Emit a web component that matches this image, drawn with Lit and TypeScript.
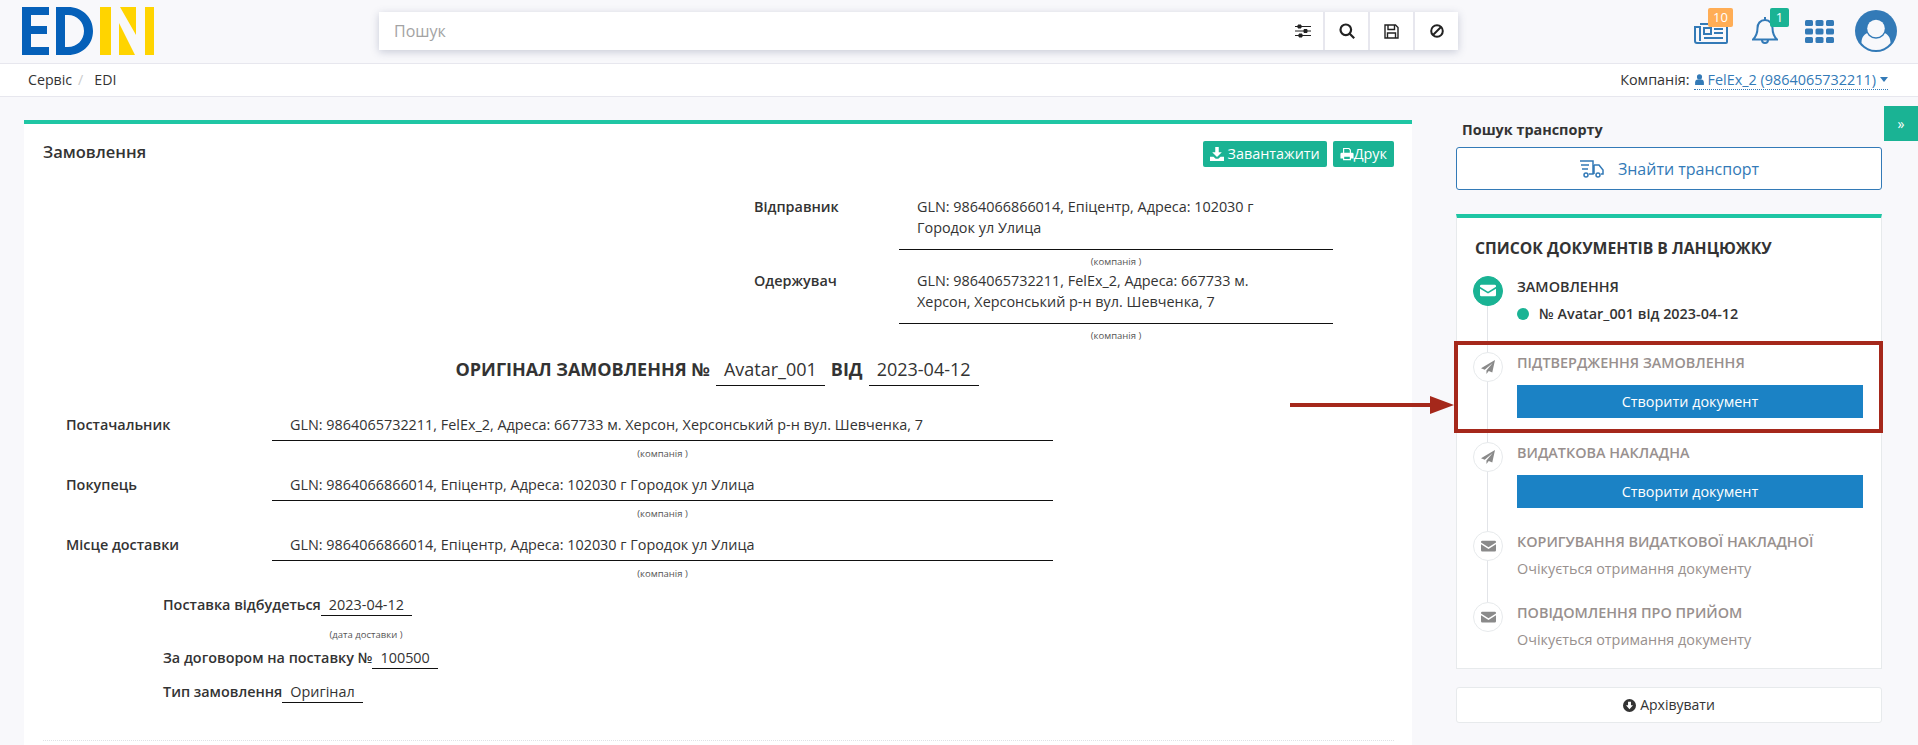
import { LitElement, css, html, svg } from "lit";
import { customElement } from "lit/decorators.js";

const ICONS = {
  envelope: svg`<path d="M1.500 2h15A1.500 1.500 0 0 1 18 3.500v.8L9 9.800 0 4.300v-.8A1.500 1.500 0 0 1 1.500 2zM0 6.400l9 5.500 9-5.500v7.100a1.500 1.500 0 0 1-1.500 1.500h-15A1.500 1.500 0 0 1 0 13.500z"/>`,
  plane: svg`<path d="M18 0 0 10.500l4.800 2L15 4 7 13.500V18l3-3.800 4.500 1.900z"/>`,
  download: svg`<path d="M6 0h4v6h3.500L8 11.500 2.500 6H6zM0 11h4l2.500 2.500h3L12 11h4v5H0z"/>`,
  print: svg`<path fill-rule="evenodd" d="M3.500 1h7L12.500 3v3.500h-1.300V3.600L9.900 2.300H4.800v4.200H3.500zM2 6.500h12A1.500 1.500 0 0 1 15.500 8v5h-3v2h-9v-2h-3V8A1.500 1.500 0 0 1 2 6.500zM4.800 11v2.800h6.400V11z"/>`,
  user: svg`<circle cx="6" cy="4" r="3.500"/><path d="M0 15v-3.500C0 9 1.500 7.500 3.500 7.500h5c2 0 3.500 1.500 3.500 4V15z"/>`,
  archive: svg`<path fill-rule="evenodd" d="M8 0a8 8 0 1 1 0 16A8 8 0 0 1 8 0zM6.200 3.500v4.300H3.700L8 12.500l4.300-4.700H9.800V3.500z"/>`,
};

const icon = (name: keyof typeof ICONS, size: number, box = "0 0 18 18") =>
  html`<svg class="ico" width=${size} height=${size} viewBox=${box} fill="currentColor">${ICONS[name]}</svg>`;

const PARTIES = [
  {
    label: "Постачальник",
    value: "GLN: 9864065732211, FelEx_2, Адреса: 667733 м. Херсон, Херсонський р-н вул. Шевченка, 7",
  },
  { label: "Покупець", value: "GLN: 9864066866014, Епіцентр, Адреса: 102030 г Городок ул Улица" },
  { label: "Місце доставки", value: "GLN: 9864066866014, Епіцентр, Адреса: 102030 г Городок ул Улица" },
];

@customElement("app-root")
export class AppRoot extends LitElement {
  static styles = css`
    :host {
      display: block;
      position: relative;
      height: 745px;
      overflow: hidden;
      background: #f8f8fb;
      color: #333;
      font: 14.4px/20px "Open Sans", sans-serif;
    }
    .ico {
      display: block;
      flex-shrink: 0;
    }
    .topbar {
      height: 63px;
      display: flex;
      align-items: flex-start;
      border-bottom: 1px solid #e7e7ee;
    }
    .logo {
      margin: 7px 0 0 22px;
      flex-shrink: 0;
    }
    .search {
      margin: 12px 0 0 225px;
      width: 1079px;
      height: 38px;
      display: flex;
      background: #fff;
      box-shadow: 0 2px 8px rgba(60, 70, 110, 0.25);
    }
    .search-input {
      flex: 1;
      padding-left: 15px;
      font-size: 16px;
      line-height: 38px;
      color: #a3a3a3;
    }
    .search-btn {
      display: flex;
      align-items: center;
      justify-content: center;
      box-sizing: border-box;
      width: 45px;
      border-left: 2px solid #e7e7ee;
      color: #222;
    }
    .search-btn.first {
      width: 39px;
      border-left: none;
      padding-right: 2px;
    }
    .top-icons {
      position: relative;
      flex: 1;
      height: 63px;
      color: #337ab7;
    }
    .top-icons > svg {
      position: absolute;
    }
    .badge {
      position: absolute;
      top: 8px;
      height: 19px;
      border-radius: 2px;
      color: #fff;
      font-size: 13px;
      line-height: 19px;
      text-align: center;
    }
    .badge.orange {
      left: 250px;
      width: 25px;
      background: #ffad55;
    }
    .badge.green {
      left: 312px;
      width: 19px;
      background: #1ab394;
    }
    .crumbs {
      height: 32px;
      display: flex;
      align-items: center;
      justify-content: space-between;
      padding: 0 30px 0 28px;
      background: #fff;
      border-bottom: 1px solid #e7e7ee;
    }
    .crumbs-left {
      display: flex;
      font-size: 14.2px;
    }
    .crumb-sep {
      margin: 0 11px 0 6px;
      color: #ccc;
    }
    .company {
      display: flex;
      align-items: center;
      gap: 4px;
    }
    .company-link {
      display: flex;
      align-items: center;
      gap: 3px;
      color: #337ab7;
      border-bottom: 1px dotted #337ab7;
      line-height: 19px;
    }
    .caret {
      width: 0;
      height: 0;
      margin-left: 1px;
      border: 4.5px solid transparent;
      border-top: 5px solid #337ab7;
      border-bottom: 0;
    }
    .content {
      display: flex;
      align-items: flex-start;
      padding: 23px 0 0 24px;
    }
    .doc {
      width: 1388px;
      height: 640px;
      flex-shrink: 0;
      box-sizing: border-box;
      background: #fff;
      border-top: 4px solid #1fc6a4;
      padding: 17px 18px 0 19px;
    }
    .doc-head {
      display: flex;
      justify-content: space-between;
      height: 55px;
    }
    .doc-title {
      font-size: 16.5px;
      font-weight: 600;
      line-height: 22px;
    }
    .doc-actions {
      display: flex;
      gap: 6px;
      height: 26px;
    }
    .btn {
      display: flex;
      align-items: center;
      gap: 4px;
      height: 26px;
      padding: 0 7px;
      border-radius: 2px;
      background: #1ab394;
      color: #fff;
    }
    .addresses {
      display: grid;
      grid-template-columns: 145px 434px;
      margin-left: 711px;
    }
    .addr-label {
      font-weight: 600;
      line-height: 21px;
    }
    .addr-value {
      padding: 0 30px 11px 18px;
      border-bottom: 1px solid #111;
      line-height: 21px;
    }
    .caption {
      font-size: 9.5px;
      line-height: 12px;
      text-align: center;
      color: #555;
    }
    .addr-caption {
      grid-column: 2;
      margin: 6px 0 2px;
    }
    .order-title {
      display: flex;
      justify-content: center;
      align-items: baseline;
      margin: 10px 0 0 -3px;
      font-size: 18px;
      font-weight: 700;
      line-height: 31px;
    }
    .fill {
      margin-left: 6px;
      padding: 0 8px;
      border-bottom: 1px solid #111;
      font-weight: 400;
    }
    .order-title .sep {
      margin-left: 6px;
    }
    .parties {
      margin: 24px 0 0 23px;
      display: grid;
      grid-template-columns: 206px 781px;
    }
    .party-label {
      font-weight: 600;
      line-height: 30px;
    }
    .party-value {
      padding-left: 18px;
      border-bottom: 1px solid #111;
      line-height: 30px;
    }
    .party-caption {
      grid-column: 2;
      margin: 7px 0 10px;
    }
    .terms {
      margin: 5px 0 0 120px;
    }
    .term {
      display: flex;
      font-weight: 600;
      line-height: 20px;
    }
    .term-fill {
      padding: 0 8px;
      font-weight: 400;
      border-bottom: 1px solid #111;
    }
    .term-caption {
      width: 92px;
      margin: 13px 0 7px 157px;
      white-space: nowrap;
    }
    .term + .term {
      margin-top: 13px;
    }
    .dots {
      margin-top: 37px;
      border-top: 1px dotted #dfe2e6;
    }
    .side {
      width: 426px;
      margin-left: 44px;
      flex-shrink: 0;
    }
    .side-title {
      padding-left: 6px;
      font-weight: 700;
      line-height: 20px;
    }
    .find {
      display: flex;
      align-items: center;
      justify-content: center;
      gap: 13px;
      height: 43px;
      margin-top: 7px;
      box-sizing: border-box;
      border: 1px solid #337ab7;
      border-radius: 3px;
      background: #fff;
      color: #337ab7;
      font-size: 16px;
    }
    .chain {
      margin-top: 24px;
      height: 455px;
      box-sizing: border-box;
      background: #fff;
      border: 1px solid #e7eaec;
      border-top: 4px solid #1fc6a4;
      padding: 19px 18px 0 16px;
    }
    .chain-title {
      margin: 0 0 17px 2px;
      font-size: 15.75px;
      font-weight: 700;
      line-height: 22px;
      text-transform: uppercase;
    }
    .step {
      position: relative;
      display: flex;
      gap: 14px;
    }
    .step:not(:last-child)::before {
      content: "";
      position: absolute;
      left: 14px;
      top: 0;
      bottom: 0;
      width: 1px;
      background: #e2e4e8;
    }
    .step-dot {
      position: relative;
      width: 30px;
      height: 30px;
      flex-shrink: 0;
      box-sizing: border-box;
      display: flex;
      align-items: center;
      justify-content: center;
      border: 1px solid #e7eaec;
      border-radius: 50%;
      background: #fff;
      color: #8a8a8a;
    }
    .step-dot.done {
      border-color: #1ab394;
      background: #1ab394;
      color: #fff;
    }
    .step-body {
      flex: 1;
      padding-top: 1px;
    }
    .step-title {
      font-weight: 600;
      color: #98908e;
      line-height: 20px;
    }
    .done + .step-body .step-title {
      color: #333;
    }
    .step-note {
      margin-top: 7px;
      color: #98908e;
    }
    .step-doc {
      display: flex;
      align-items: center;
      gap: 10px;
      margin-top: 7px;
      font-weight: 600;
    }
    .status-dot {
      width: 12px;
      height: 12px;
      border-radius: 50%;
      background: #1ab394;
    }
    .create {
      height: 33px;
      margin-top: 12px;
      background: #1b82c5;
      color: #fff;
      line-height: 33px;
      text-align: center;
    }
    .archive {
      display: flex;
      align-items: center;
      justify-content: center;
      gap: 4px;
      height: 36px;
      margin-top: 18px;
      box-sizing: border-box;
      border: 1px solid #e7eaec;
      border-radius: 3px;
      background: #fff;
      font-size: 14px;
    }
    .toggle {
      position: absolute;
      top: 106px;
      right: 0;
      width: 34px;
      height: 35px;
      background: #1ab394;
      color: #fff;
      font-size: 14px;
      line-height: 35px;
      text-align: center;
    }
    .highlight {
      position: absolute;
      left: 1454px;
      top: 341px;
      width: 421px;
      height: 84px;
      border: 4px solid #a5281b;
    }
    .arrow {
      position: absolute;
      left: 1290px;
      top: 396px;
    }
  `;

  private renderTopIcons() {
    return html`
      <div class="top-icons">
        <svg style="left:236px;top:21px" width="34" height="23" viewBox="0 0 34 23" fill="none" stroke="currentColor" stroke-width="2">
          <path d="M6 3h26a1 1 0 0 1 1 1v17a1 1 0 0 1-1 1H3a2 2 0 0 1-2-2V6h5v14" />
          <path d="M10 7h7v6h-7zM20 8h9M20 12h9M10 17h19" />
        </svg>
        <span class="badge orange">10</span>
        <svg style="left:294px;top:16px" width="26" height="30" viewBox="0 0 26 30" fill="none" stroke="currentColor" stroke-width="2">
          <path d="M13 4c-5 0-7.500 4-7.500 8 0 6-2 9-4.500 11.500h24C22.500 21 20.500 18 20.500 12c0-4-2.500-8-7.500-8z" />
          <path d="M13 1v3M10 24a3 3 0 0 0 6 0" />
        </svg>
        <span class="badge green">1</span>
        <svg style="left:347px;top:20px" width="29" height="23" viewBox="0 0 29 23" fill="currentColor">
          ${[0, 8.5, 17].map((y) =>
            [0, 10.5, 21].map(
              (x) => svg`<rect x=${x} y=${y} width="8" height="6" rx="1.5" />`,
            ),
          )}
        </svg>
        <svg style="left:397px;top:10px" width="42" height="42" viewBox="0 0 42 42">
          <circle cx="21" cy="21" r="21" fill="currentColor" />
          <path fill="#f8f8fb" d="M6.500 33c0-6 3-9.500 7.500-10.500 2 2 4.500 3 7 3s5-1 7-3c4.500 1 7.500 4.500 7.500 10.500a18.500 18.500 0 0 1-29 0z" />
          <circle cx="21" cy="18.500" r="10.300" fill="currentColor" />
          <circle cx="21" cy="18.500" r="8.800" fill="#f8f8fb" />
        </svg>
      </div>
    `;
  }

  render() {
    return html`
      <header class="topbar">
        <svg class="logo" width="132" height="48" viewBox="0 0 132 48">
          <path fill="#0560b9" d="M0 0h27v8H9v11h16v8H9v13h18v8H0zM34 0h12c14 0 25 10 25 24S60 48 46 48H34zM43 8v32h3c9 0 16-7 16-16S55 8 46 8z" />
          <path fill="#ffd400" d="M78 0h11v48H78zM97 16l16 32H97zM98 0h16v28zM123 0h9v48h-9z" />
        </svg>
        <div class="search">
          <div class="search-input">Пошук</div>
          <div class="search-btn first">
            <svg width="16" height="14" viewBox="0 0 16 14" fill="none" stroke="currentColor">
              <path d="M0 2.500h16M0 7h16M0 11.500h16" />
              <path fill="currentColor" d="M3 1h3v3H3zM9 5.500h3v3H9zM4 10h3v3H4z" />
            </svg>
          </div>
          <div class="search-btn">
            <svg width="16" height="16" viewBox="0 0 16 16" fill="none" stroke="currentColor" stroke-width="2.200">
              <circle cx="6.800" cy="6.800" r="5.300" />
              <path d="m10.500 10.500 4.700 4.700" />
            </svg>
          </div>
          <div class="search-btn">
            <svg width="15" height="15" viewBox="0 0 15 15" fill="none" stroke="currentColor" stroke-width="1.400">
              <path d="M1 1h10.500L14 3.500V14H1z" />
              <path d="M4 1v4.500h6.500V1M3.500 14V9h8v5" />
            </svg>
          </div>
          <div class="search-btn">
            <svg width="14" height="14" viewBox="0 0 14 14" fill="none" stroke="currentColor" stroke-width="2">
              <circle cx="7" cy="7" r="5.800" />
              <path d="m3 11 8-8" />
            </svg>
          </div>
        </div>
        ${this.renderTopIcons()}
      </header>

      <nav class="crumbs">
        <div class="crumbs-left">
          <span>Сервіс</span><span class="crumb-sep">/</span><span>EDI</span>
        </div>
        <div class="company">
          <span>Компанія:</span>
          <span class="company-link">
            ${icon("user", 11, "0 0 12 15")}FelEx_2 (9864065732211)<span class="caret"></span>
          </span>
        </div>
      </nav>

      <main class="content">
        <section class="doc">
          <div class="doc-head">
            <div class="doc-title">Замовлення</div>
            <div class="doc-actions">
              <div class="btn">${icon("download", 14, "0 0 16 16")}Завантажити</div>
              <div class="btn">${icon("print", 14, "0 0 16 16")}<span style="margin-left:-4px">Друк</span></div>
            </div>
          </div>
          <div class="addresses">
            <div class="addr-label">Відправник</div>
            <div class="addr-value">GLN: 9864066866014, Епіцентр, Адреса: 102030 г Городок ул Улица</div>
            <div class="caption addr-caption">(компанія )</div>
            <div class="addr-label">Одержувач</div>
            <div class="addr-value">GLN: 9864065732211, FelEx_2, Адреса: 667733 м. Херсон, Херсонський р-н вул. Шевченка, 7</div>
            <div class="caption addr-caption">(компанія )</div>
          </div>
          <div class="order-title">
            ОРИГІНАЛ ЗАМОВЛЕННЯ №<span class="fill">Avatar_001</span><span class="sep">ВІД</span><span class="fill">2023-04-12</span>
          </div>
          <div class="parties">
            ${PARTIES.map(
              (p) => html`
                <div class="party-label">${p.label}</div>
                <div class="party-value">${p.value}</div>
                <div class="caption party-caption">(компанія )</div>
              `,
            )}
          </div>
          <div class="terms">
            <div class="term">Поставка відбудеться<span class="term-fill">2023-04-12</span></div>
            <div class="caption term-caption">(дата доставки )</div>
            <div class="term" style="margin-top:0">За договором на поставку №<span class="term-fill">100500</span></div>
            <div class="term">Тип замовлення<span class="term-fill">Оригінал</span></div>
          </div>
          <div class="dots"></div>
        </section>

        <aside class="side">
          <div class="side-title">Пошук транспорту</div>
          <div class="find">
            <svg width="26" height="20" viewBox="0 0 26 20" fill="none" stroke="currentColor" stroke-width="1.500">
              <path d="M1 2h13v13h-4M15 6h5l4 5v4h-2M15 15V6M2 6h8M3 10h6" />
              <circle cx="7" cy="16" r="2" />
              <circle cx="19" cy="16" r="2" />
            </svg>
            Знайти транспорт
          </div>
          <div class="chain">
            <div class="chain-title">Список документів в ланцюжку</div>
            <div class="step" style="height:76px">
              <div class="step-dot done">${icon("envelope", 16)}</div>
              <div class="step-body">
                <div class="step-title">ЗАМОВЛЕННЯ</div>
                <div class="step-doc"><span class="status-dot"></span>№ Avatar_001 від 2023-04-12</div>
              </div>
            </div>
            <div class="step" style="height:90px">
              <div class="step-dot">${icon("plane", 14)}</div>
              <div class="step-body">
                <div class="step-title">ПІДТВЕРДЖЕННЯ ЗАМОВЛЕННЯ</div>
                <div class="create">Створити документ</div>
              </div>
            </div>
            <div class="step" style="height:89px">
              <div class="step-dot">${icon("plane", 14)}</div>
              <div class="step-body">
                <div class="step-title">ВИДАТКОВА НАКЛАДНА</div>
                <div class="create">Створити документ</div>
              </div>
            </div>
            <div class="step" style="height:71px">
              <div class="step-dot">${icon("envelope", 15)}</div>
              <div class="step-body">
                <div class="step-title">КОРИГУВАННЯ ВИДАТКОВОЇ НАКЛАДНОЇ</div>
                <div class="step-note">Очікується отримання документу</div>
              </div>
            </div>
            <div class="step">
              <div class="step-dot">${icon("envelope", 15)}</div>
              <div class="step-body">
                <div class="step-title">ПОВІДОМЛЕННЯ ПРО ПРИЙОМ</div>
                <div class="step-note">Очікується отримання документу</div>
              </div>
            </div>
          </div>
          <div class="archive">${icon("archive", 13, "0 0 16 16")}Архівувати</div>
        </aside>
      </main>

      <div class="toggle">»</div>
      <div class="highlight"></div>
      <svg class="arrow" width="164" height="18" viewBox="0 0 164 18" fill="#a5281b">
        <path d="M0 7h140V0l24 9-24 9v-7H0z" />
      </svg>
    `;
  }
}
